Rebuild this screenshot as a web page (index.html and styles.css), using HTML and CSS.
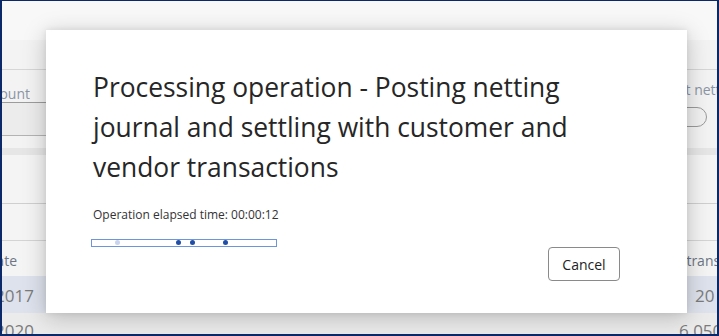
FILE: index.html
```html
<!DOCTYPE html>
<html>
<head>
<meta charset="utf-8">
<link rel="stylesheet" href="styles.css">
</head>
<body>
<div class="frame">
  <div class="page">
    <div class="top"></div>
    <div class="filters">
      <div class="filter-labels">
        <div class="lcol"><span>Amount</span></div>
        <div class="rcol"><span>Post netting</span></div>
      </div>
      <div class="filter-inputs">
        <div class="lcol field"></div>
        <div class="rcol"><span class="pill"></span></div>
      </div>
    </div>
    <div class="band"></div>
    <div class="grid">
      <div class="blank blank1"></div>
      <div class="blank blank2"></div>
      <div class="grow head">
        <div class="lcol"><span>Date</span></div>
        <div class="rcol"><span>Last transaction</span></div>
      </div>
      <div class="grow sel">
        <div class="lcol num"><span>2017</span></div>
        <div class="rcol num right"><span>20</span></div>
      </div>
      <div class="grow last">
        <div class="lcol num"><span>2020</span></div>
        <div class="rcol num right2"><span>6 050</span></div>
      </div>
    </div>
  </div>

  <div class="dialog">
    <div class="dialog-body">
      <h1 class="title">Processing operation - Posting netting journal and settling with customer and vendor transactions</h1>
      <p class="elapsed">Operation elapsed time: 00:00:12</p>
      <div class="progress">
        <span class="dot faint d1"></span>
        <span class="dot d2"></span>
        <span class="dot d3"></span>
        <span class="dot d4"></span>
      </div>
    </div>
    <div class="dialog-footer">
      <button class="btn">Cancel</button>
    </div>
  </div>
</div>
</body>
</html>
```
FILE: styles.css
```css
html, body {
  margin: 0;
  padding: 0;
  background: #f8f8f8;
}
.frame {
  position: relative;
  width: 719px;
  height: 336px;
  box-sizing: border-box;
  border-style: solid;
  border-color: #0b2868;
  border-width: 1px 2px 2px 2px;
  overflow: hidden;
  font-family: "Open Sans", "Noto Sans", sans-serif;
}
.page {
  display: flex;
  flex-direction: column;
  height: 100%;
}
.top {
  height: 39px;
  background: #f8f8f8;
  flex: none;
}
.filters {
  flex: none;
  height: 108px;
  background: #f3f3f3;
  padding-top: 29px;
  box-sizing: border-box;
}
.filter-labels {
  display: flex;
  justify-content: space-between;
  border-top: 1px solid #d6d6d6;
  height: 33px;
  box-sizing: border-box;
}
.lcol {
  width: 28px;
  overflow: hidden;
  display: flex;
  justify-content: flex-end;
  white-space: nowrap;
}
.rcol {
  width: 80px;
  overflow: hidden;
  display: flex;
  justify-content: flex-start;
  white-space: nowrap;
}
.filter-labels span {
  font-size: 14px;
  line-height: 20px;
  color: #8a95a6;
  margin-top: 14px;
}
.filter-labels .rcol span {
  margin-top: 10px;
  padding-left: 25px;
}
.filter-inputs {
  display: flex;
  justify-content: space-between;
}
.filter-inputs .field {
  width: 44px;
  height: 32px;
  border-top: 1px solid #9c9c9c;
  border-bottom: 1px solid #b3b3b3;
  background: #ececec;
}
.filter-inputs .rcol {
  width: 80px;
  padding-top: 5px;
  justify-content: flex-end;
  padding-right: 10px;
  box-sizing: border-box;
}
.pill {
  width: 50px;
  height: 18px;
  border: 1px solid #9a9a9a;
  border-radius: 0 10px 10px 0;
  background: #f1f1f1;
  flex: none;
}
.band {
  flex: none;
  height: 7px;
  background: #e6e6e6;
}
.grid {
  flex: 1;
  display: flex;
  flex-direction: column;
  background: #f4f4f4;
}
.blank1 {
  height: 48px;
  border-bottom: 1px solid #cfcfcf;
}
.blank2 {
  height: 36px;
  border-bottom: 1px solid #d4d4d4;
}
.grow {
  display: flex;
  justify-content: space-between;
  align-items: center;
}
.grow.head {
  height: 35px;
  color: #6d7685;
  font-size: 14px;
}
.grow.head span {
  margin-top: 4px;
}
.grow.head .lcol {
  width: 15px;
}
.grow.head .rcol span {
  padding-left: 19px;
}
.grow.sel {
  height: 37px;
  background: #dde2ec;
}
.num {
  font-size: 17px;
  color: #7b7b7b;
}
.grow.sel span {
  margin-top: 2px;
}
.grow.sel .lcol, .grow.last .lcol {
  width: 32px;
}
.right {
  width: 22px !important;
}
.grow.last {
  height: 22px;
  background: #ebebeb;
  align-items: flex-start;
}
.grow.last span {
  line-height: 22px;
  margin-top: 7px;
}
.right2 {
  width: 38px !important;
}

/* Dialog overlay */
.dialog {
  position: absolute;
  left: 44px;
  top: 29px;
  width: 641px;
  height: 283px;
  background: #ffffff;
  box-shadow: 0 4px 22px rgba(0, 0, 0, 0.22), 0 0 6px rgba(0, 0, 0, 0.08);
  box-sizing: border-box;
  padding: 37px 67px 33px 47px;
  display: flex;
  flex-direction: column;
}
.title {
  margin: 0;
  font-weight: 400;
  font-size: 26.4px;
  line-height: 40px;
  color: #262626;
  width: 520px;
}
.elapsed {
  margin: 20px 0 0 0;
  font-size: 12px;
  line-height: 16px;
  color: #333333;
}
.progress {
  position: relative;
  margin: 16px 0 0 -2px;
  width: 186px;
  height: 8px;
  box-sizing: border-box;
  border: 1px solid #6e95dc;
  background: #ffffff;
}
.dot {
  position: absolute;
  top: 0;
  width: 5px;
  height: 5px;
  border-radius: 50%;
  background: #1e4ea8;
}
.dot.faint {
  background: #c7d4ee;
}
.d1 { left: 23px; }
.d2 { left: 84px; }
.d3 { left: 98px; }
.d4 { left: 131px; }
.dialog-footer {
  margin-top: auto;
  display: flex;
  justify-content: flex-end;
}
.btn {
  width: 72px;
  height: 34px;
  border: 1px solid #8a8a8a;
  border-radius: 4px;
  background: #ffffff;
  font-family: "Open Sans", "Noto Sans", sans-serif;
  font-size: 14px;
  color: #222222;
  padding: 0;
}
```
